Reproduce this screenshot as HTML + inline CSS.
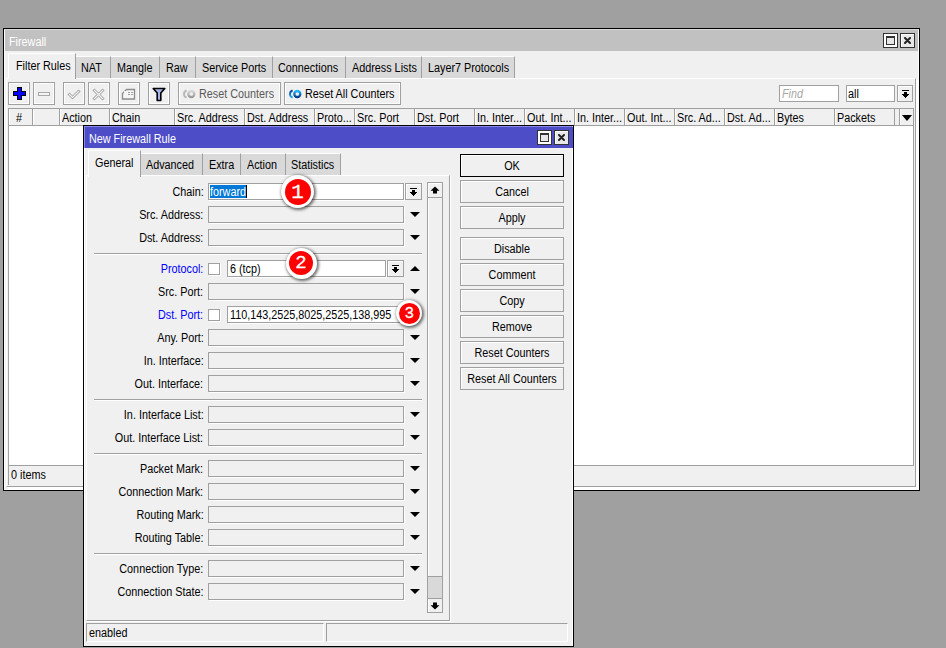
<!DOCTYPE html>
<html><head><meta charset="utf-8"><style>
*{box-sizing:border-box;margin:0;padding:0}
html,body{width:946px;height:648px;overflow:hidden}
body{background:#a0a0a0;position:relative;font-family:"Liberation Sans",sans-serif;font-size:12px;color:#000}
div,svg{position:absolute}
.t{white-space:nowrap;line-height:13px;height:13px;transform:scaleX(0.9)}
.tb{top:82px;width:22px;height:23px;border:1px solid #a0a0a0;background:#f0f0f0;box-shadow:inset 1px 1px 0 #fff,inset -1px -1px 0 #fff}
.tab{height:21px;background:#d9d9d9;border-right:1px solid #a0a0a0;border-top:1px solid #fff}
.hc{top:109px;height:16px;border-right:1px solid #a0a0a0;box-shadow:inset 1px 0 0 #fff}
.in{width:196px;height:17px;border:1px solid #a0a0a0;background:#f0f0f0;box-shadow:1px 1px 0 #fff}
.inw{background:#fff}
.dd{width:0;height:0;border-left:5px solid transparent;border-right:5px solid transparent;border-top:5px solid #000}
.ddu{width:0;height:0;border-left:5px solid transparent;border-right:5px solid transparent;border-bottom:5px solid #000}
.sep{height:2px;border-top:1px solid #a0a0a0;border-bottom:1px solid #fff}
.db{left:460px;width:104px;height:23px;border:1px solid #a0a0a0;background:#f0f0f0;box-shadow:inset 1px 1px 0 #fff}
.ddb{width:17px;height:17px;border:1px solid #a0a0a0;background:#f0f0f0;box-shadow:inset 1px 1px 0 #fff}
.cb{width:12px;height:12px;border:1px solid #a0a0a0;background:#fff;box-shadow:1px 1px 0 #fff}
.bdg{border-radius:50%;background:#fff;box-shadow:1px 1px 3px 1px rgba(0,0,0,.55)}
.bdr{border-radius:50%;background:#ff0000;color:#fff;text-align:center;font-family:"Liberation Mono",monospace;font-weight:normal;-webkit-text-stroke:0.3px #fff}
</style></head><body>
<div style="left:3px;top:28px;width:917px;height:463px;border:1px solid #000;background:#f0f0f0"></div>
<div style="left:4px;top:29px;width:915px;height:461px;border:1px solid #fff"></div>
<div style="left:5px;top:30px;width:913px;height:21px;background:#c1c1c1"></div>
<div style="left:4px;top:29px;width:915px;height:1px;background:#dadada"></div>
<div class="t" style="top:36px;color:#fff;left:9.3px;transform-origin:0 0;">Firewall</div>
<div style="left:883px;top:33px;width:15px;height:15px;border:1px solid #333;background:#fff"></div>
<div style="left:886px;top:36px;width:9px;height:9px;border:1px solid #333;border-top-width:2px;background:#e8e6e8"></div>
<div style="left:900px;top:33px;width:15px;height:15px;border:1px solid #333;background:#e8e8e8;box-shadow:inset 1px 1px 0 #fff"></div>
<svg style="left:904px;top:37px" width="7" height="7" viewBox="0 0 7 7"><path d="M1 1L6 6M6 1L1 6" stroke="#222" stroke-width="2" stroke-linecap="round"/></svg>
<div style="left:6px;top:78px;width:910px;height:409px;border-left:1px solid #fff;border-top:1px solid #fff;border-right:1px solid #a0a0a0;border-bottom:1px solid #a0a0a0;box-shadow:1px 1px 0 #fff,2px 2px 0 #fff"></div>
<div class="tab" style="left:76px;top:56px;width:35px;height:22px"></div>
<div class="tab" style="left:111px;top:56px;width:49px;height:22px"></div>
<div class="tab" style="left:160px;top:56px;width:36px;height:22px"></div>
<div class="tab" style="left:196px;top:56px;width:77px;height:22px"></div>
<div class="tab" style="left:273px;top:56px;width:73px;height:22px"></div>
<div class="tab" style="left:346px;top:56px;width:76px;height:22px"></div>
<div class="tab" style="left:422px;top:56px;width:93px;height:22px"></div>
<div style="left:8px;top:53px;width:68px;height:26px;background:#f0f0f0;border-left:1px solid #fff;border-top:1px solid #fff;border-right:1px solid #a0a0a0"></div>
<div class="t" style="top:60px;left:16.3px;transform-origin:0 0;">Filter Rules</div>
<div class="t" style="top:62px;left:81.3px;transform-origin:0 0;">NAT</div>
<div class="t" style="top:62px;left:117.3px;transform-origin:0 0;">Mangle</div>
<div class="t" style="top:62px;left:166.3px;transform-origin:0 0;">Raw</div>
<div class="t" style="top:62px;left:202.3px;transform-origin:0 0;">Service Ports</div>
<div class="t" style="top:62px;left:278.3px;transform-origin:0 0;">Connections</div>
<div class="t" style="top:62px;left:352.3px;transform-origin:0 0;">Address Lists</div>
<div class="t" style="top:62px;left:428.3px;transform-origin:0 0;">Layer7 Protocols</div>
<div class="tb" style="left:8px"></div>
<svg style="left:13px;top:87px" width="13" height="13" viewBox="0 0 13 13" shape-rendering="crispEdges"><path d="M4 0h5v4h4v5h-4v4h-5v-4h-4v-5h4z" fill="#000"/><path d="M5 1h3v4h4v3h-4v4h-3v-4h-4v-3h4z" fill="#0000ff"/></svg>
<div class="tb" style="left:33px"></div>
<div style="left:38px;top:92px;width:12px;height:4px;border:1px solid #a8a8a8;background:#f4f4f4"></div>
<div class="tb" style="left:63px"></div>
<svg style="left:67px;top:88px" width="14" height="12" viewBox="0 0 14 12"><path d="M2.5 6.5l3 3 6-6" fill="none" stroke="#a8a8a8" stroke-width="3" stroke-linecap="square"/><path d="M2.5 6.5l3 3 6-6" fill="none" stroke="#f4f4f4" stroke-width="1.1" stroke-linecap="square"/></svg>
<div class="tb" style="left:88px"></div>
<svg style="left:92px;top:88px" width="13" height="13" viewBox="0 0 13 13"><path d="M2.5 2.5l8 8M10.5 2.5l-8 8" fill="none" stroke="#a8a8a8" stroke-width="3" stroke-linecap="square"/><path d="M2.5 2.5l8 8M10.5 2.5l-8 8" fill="none" stroke="#f4f4f4" stroke-width="1.1" stroke-linecap="square"/></svg>
<div class="tb" style="left:118px"></div>
<svg style="left:121px;top:88px" width="15" height="13" viewBox="0 0 15 13"><path d="M5.5 1.5h8v9.5h-12v-5.5z" fill="#f6f6f6" stroke="#8c8c8c" stroke-width="1.3"/><path d="M7 4.5h2M10 4.5h2M7 6.5h2M10 6.5h2" stroke="#a0a0a0" stroke-width="1"/><rect x="3" y="3" width="1.6" height="1.6" fill="#fff"/></svg>
<div class="tb" style="left:148px"></div>
<svg style="left:152px;top:87px" width="14" height="15" viewBox="0 0 14 15"><path d="M1.2 1.5h11.6l-4 4.6v7.4h-3.6v-7.4z" fill="#a4b4e8" stroke="#000" stroke-width="1.6" stroke-linejoin="round"/></svg>
<div class="tb" style="left:178px;width:103px"></div>
<svg style="left:182px;top:89px" width="14" height="10" viewBox="0 0 14 10"><defs><linearGradient id="g1" x1="0" y1="0" x2="0" y2="1"><stop offset="0" stop-color="#d8d8d8"/><stop offset="1" stop-color="#9a9a9a"/></linearGradient></defs><path d="M4.6 1.3A5 4.2 0 0 0 4.6 8.7" fill="none" stroke="#b8b8b8" stroke-width="1.9"/><circle cx="9.3" cy="5" r="3" fill="none" stroke="url(#g1)" stroke-width="2.3"/></svg>
<div class="t" style="top:88px;color:#5a5a5a;left:198.8px;transform-origin:0 0;">Reset Counters</div>
<div class="tb" style="left:284px;width:117px"></div>
<svg style="left:288px;top:89px" width="14" height="10" viewBox="0 0 14 10"><defs><linearGradient id="g2" x1="0" y1="0" x2="0" y2="1"><stop offset="0" stop-color="#20b8ff"/><stop offset="1" stop-color="#003a8a"/></linearGradient><linearGradient id="g3" x1="0" y1="0" x2="0" y2="1"><stop offset="0" stop-color="#0a3c90"/><stop offset="1" stop-color="#28b0f8"/></linearGradient></defs><path d="M4.6 1.3A5 4.2 0 0 0 4.6 8.7" fill="none" stroke="url(#g3)" stroke-width="1.9"/><circle cx="9.3" cy="5" r="3" fill="none" stroke="url(#g2)" stroke-width="2.3"/></svg>
<div class="t" style="top:88px;left:304.8px;transform-origin:0 0;">Reset All Counters</div>
<div style="left:779px;top:85px;width:60px;height:17px;border:1px solid #a0a0a0;background:#fff"></div>
<div class="t" style="top:88px;color:#a8a8a8;left:782.3px;transform-origin:0 0;font-style:italic;">Find</div>
<div style="left:846px;top:85px;width:49px;height:17px;border:1px solid #a0a0a0;background:#fff"></div>
<div class="t" style="top:88px;left:847.8px;transform-origin:0 0;">all</div>
<div class="ddb" style="left:897px;top:85px;width:16px"></div>
<svg style="left:902px;top:90px" width="7" height="8" viewBox="0 0 7 8" shape-rendering="crispEdges"><path d="M0 0h7v1H0zM2 2h3v2h2v1h-1v1h-1v1h-1v1h-1v-1h-1v-1h-1v-1h-1v-1h2z" fill="#000"/></svg>
<div style="left:8px;top:108px;width:906px;height:358px;border:1px solid #a0a0a0;background:#fff"></div>
<div style="left:9px;top:109px;width:904px;height:17px;background:#f0f0f0;border-bottom:1px solid #a0a0a0"></div>
<div class="hc" style="left:9px;width:24px"></div>
<div class="t" style="top:112px;left:16.3px;transform-origin:0 0;">#</div>
<div class="hc" style="left:33px;width:27px"></div>
<div class="hc" style="left:60px;width:50px"></div>
<div class="t" style="top:112px;left:62.3px;transform-origin:0 0;">Action</div>
<div class="hc" style="left:110px;width:65px"></div>
<div class="t" style="top:112px;left:112.3px;transform-origin:0 0;">Chain</div>
<div class="hc" style="left:175px;width:70px"></div>
<div class="t" style="top:112px;left:177.3px;transform-origin:0 0;">Src. Address</div>
<div class="hc" style="left:245px;width:70px"></div>
<div class="t" style="top:112px;left:247.3px;transform-origin:0 0;">Dst. Address</div>
<div class="hc" style="left:315px;width:40px"></div>
<div class="t" style="top:112px;left:317.3px;transform-origin:0 0;">Proto...</div>
<div class="hc" style="left:355px;width:60px"></div>
<div class="t" style="top:112px;left:357.3px;transform-origin:0 0;">Src. Port</div>
<div class="hc" style="left:415px;width:60px"></div>
<div class="t" style="top:112px;left:417.3px;transform-origin:0 0;">Dst. Port</div>
<div class="hc" style="left:475px;width:50px"></div>
<div class="t" style="top:112px;left:477.3px;transform-origin:0 0;">In. Inter...</div>
<div class="hc" style="left:525px;width:50px"></div>
<div class="t" style="top:112px;left:527.3px;transform-origin:0 0;">Out. Int...</div>
<div class="hc" style="left:575px;width:50px"></div>
<div class="t" style="top:112px;left:577.3px;transform-origin:0 0;">In. Inter...</div>
<div class="hc" style="left:625px;width:50px"></div>
<div class="t" style="top:112px;left:627.3px;transform-origin:0 0;">Out. Int...</div>
<div class="hc" style="left:675px;width:50px"></div>
<div class="t" style="top:112px;left:677.3px;transform-origin:0 0;">Src. Ad...</div>
<div class="hc" style="left:725px;width:50px"></div>
<div class="t" style="top:112px;left:727.3px;transform-origin:0 0;">Dst. Ad...</div>
<div class="hc" style="left:775px;width:60px"></div>
<div class="t" style="top:112px;left:777.3px;transform-origin:0 0;">Bytes</div>
<div class="hc" style="left:835px;width:60px"></div>
<div class="t" style="top:112px;left:837.3px;transform-origin:0 0;">Packets</div>
<div style="left:899px;top:109px;width:14px;height:16px;border-left:1px solid #a0a0a0;box-shadow:inset 1px 0 0 #fff"></div>
<div class="dd" style="left:902px;top:115px;border-left-width:5px;border-right-width:5px;border-top-width:6px"></div>
<div style="left:8px;top:466px;width:1px;height:19px;background:#a0a0a0"></div>
<div class="t" style="top:469px;left:10.8px;transform-origin:0 0;">0 items</div>
<div style="left:83px;top:125px;width:491px;height:522px;border:1px solid #000;background:#f0f0f0"></div>
<div style="left:84px;top:126px;width:489px;height:520px;border-left:1px solid #fff;border-top:1px solid #8a8ae6;border-right:1px solid #fff"></div>
<div style="left:84px;top:126px;width:1px;height:22px;background:#8a8ae6"></div>
<div style="left:572px;top:127px;width:1px;height:21px;background:#4d4dc8"></div>
<div style="left:85px;top:127px;width:487px;height:21px;background:#4d4dc8"></div>
<div class="t" style="top:133px;color:#fff;left:89.3px;transform-origin:0 0;">New Firewall Rule</div>
<div style="left:537px;top:130px;width:15px;height:15px;border:1px solid #333;background:#fff"></div>
<div style="left:540px;top:133px;width:9px;height:9px;border:1px solid #333;border-top-width:2px;background:#e8e6e8"></div>
<div style="left:554px;top:130px;width:15px;height:15px;border:1px solid #333;background:#e8e8e8;box-shadow:inset 1px 1px 0 #fff"></div>
<svg style="left:558px;top:134px" width="7" height="7" viewBox="0 0 7 7"><path d="M1 1L6 6M6 1L1 6" stroke="#222" stroke-width="2" stroke-linecap="round"/></svg>
<div class="tab" style="left:141px;top:153px;width:62px;height:22px"></div>
<div class="tab" style="left:203px;top:153px;width:38px;height:22px"></div>
<div class="tab" style="left:241px;top:153px;width:45px;height:22px"></div>
<div class="tab" style="left:286px;top:153px;width:55px;height:22px"></div>
<div style="left:86px;top:175px;width:364px;height:446px;border-left:1px solid #fff;border-top:1px solid #fff;border-right:1px solid #a0a0a0;border-bottom:1px solid #a0a0a0;box-shadow:1px 1px 0 #fff"></div>
<div style="left:88px;top:150px;width:53px;height:27px;background:#f0f0f0;border-left:1px solid #fff;border-top:1px solid #fff;border-right:1px solid #a0a0a0"></div>
<div class="t" style="top:157px;left:95.3px;transform-origin:0 0;">General</div>
<div class="t" style="top:159px;left:146.3px;transform-origin:0 0;">Advanced</div>
<div class="t" style="top:159px;left:209.3px;transform-origin:0 0;">Extra</div>
<div class="t" style="top:159px;left:247.3px;transform-origin:0 0;">Action</div>
<div class="t" style="top:159px;left:291.3px;transform-origin:0 0;">Statistics</div>
<div style="left:94px;top:253px;width:328px;height:2px;border-top:1px solid #a0a0a0;border-bottom:1px solid #fff"></div>
<div style="left:94px;top:399px;width:328px;height:2px;border-top:1px solid #a0a0a0;border-bottom:1px solid #fff"></div>
<div style="left:94px;top:453px;width:328px;height:2px;border-top:1px solid #a0a0a0;border-bottom:1px solid #fff"></div>
<div style="left:94px;top:553px;width:328px;height:2px;border-top:1px solid #a0a0a0;border-bottom:1px solid #fff"></div>
<div class="t" style="top:186px;right:742.5px;text-align:right;transform-origin:100% 0;">Chain:</div>
<div class="in inw" style="left:208px;top:183px"></div>
<div style="left:210px;top:185px;width:37px;height:13px;background:#0078d7"></div>
<div class="t" style="top:186px;color:#fff;left:210.3px;transform-origin:0 0;">forward</div>
<div style="left:246px;top:185px;width:1px;height:13px;background:#000"></div>
<div class="ddb" style="left:405px;top:183px;width:17px"></div>
<svg style="left:410px;top:188px" width="7" height="8" viewBox="0 0 7 8" shape-rendering="crispEdges"><path d="M0 0h7v1H0zM2 2h3v2h2v1h-1v1h-1v1h-1v1h-1v-1h-1v-1h-1v-1h-1v-1h2z" fill="#000"/></svg>
<div class="t" style="top:209px;right:742.5px;text-align:right;transform-origin:100% 0;">Src. Address:</div>
<div class="in" style="left:208px;top:206px"></div>
<div class="dd" style="left:409.5px;top:212px"></div>
<div class="t" style="top:232px;right:742.5px;text-align:right;transform-origin:100% 0;">Dst. Address:</div>
<div class="in" style="left:208px;top:229px"></div>
<div class="dd" style="left:409.5px;top:235px"></div>
<div class="t" style="top:263px;color:#0000ff;right:742.5px;text-align:right;transform-origin:100% 0;">Protocol:</div>
<div class="cb" style="left:208px;top:263px"></div>
<div class="in inw" style="left:227px;top:260px;width:159px"></div>
<div class="t" style="top:263px;left:229.8px;transform-origin:0 0;">6 (tcp)</div>
<div class="ddb" style="left:387px;top:260px;width:17px"></div>
<svg style="left:392px;top:265px" width="7" height="8" viewBox="0 0 7 8" shape-rendering="crispEdges"><path d="M0 0h7v1H0zM2 2h3v2h2v1h-1v1h-1v1h-1v1h-1v-1h-1v-1h-1v-1h-1v-1h2z" fill="#000"/></svg>
<div class="ddu" style="left:409.5px;top:266px"></div>
<div class="t" style="top:286px;right:742.5px;text-align:right;transform-origin:100% 0;">Src. Port:</div>
<div class="in" style="left:208px;top:283px"></div>
<div class="dd" style="left:409.5px;top:289px"></div>
<div class="t" style="top:309px;color:#0000ff;right:742.5px;text-align:right;transform-origin:100% 0;">Dst. Port:</div>
<div class="cb" style="left:208px;top:309px"></div>
<div class="in inw" style="left:227px;top:306px;width:177px"></div>
<div class="t" style="top:309px;left:230.3px;transform-origin:0 0;">110,143,2525,8025,2525,138,995</div>
<div class="t" style="top:332px;right:742.5px;text-align:right;transform-origin:100% 0;">Any. Port:</div>
<div class="in" style="left:208px;top:329px"></div>
<div class="dd" style="left:409.5px;top:335px"></div>
<div class="t" style="top:355px;right:742.5px;text-align:right;transform-origin:100% 0;">In. Interface:</div>
<div class="in" style="left:208px;top:352px"></div>
<div class="dd" style="left:409.5px;top:358px"></div>
<div class="t" style="top:378px;right:742.5px;text-align:right;transform-origin:100% 0;">Out. Interface:</div>
<div class="in" style="left:208px;top:375px"></div>
<div class="dd" style="left:409.5px;top:381px"></div>
<div class="t" style="top:409px;right:742.5px;text-align:right;transform-origin:100% 0;">In. Interface List:</div>
<div class="in" style="left:208px;top:406px"></div>
<div class="dd" style="left:409.5px;top:412px"></div>
<div class="t" style="top:432px;right:742.5px;text-align:right;transform-origin:100% 0;">Out. Interface List:</div>
<div class="in" style="left:208px;top:429px"></div>
<div class="dd" style="left:409.5px;top:435px"></div>
<div class="t" style="top:463px;right:742.5px;text-align:right;transform-origin:100% 0;">Packet Mark:</div>
<div class="in" style="left:208px;top:460px"></div>
<div class="dd" style="left:409.5px;top:466px"></div>
<div class="t" style="top:486px;right:742.5px;text-align:right;transform-origin:100% 0;">Connection Mark:</div>
<div class="in" style="left:208px;top:483px"></div>
<div class="dd" style="left:409.5px;top:489px"></div>
<div class="t" style="top:509px;right:742.5px;text-align:right;transform-origin:100% 0;">Routing Mark:</div>
<div class="in" style="left:208px;top:506px"></div>
<div class="dd" style="left:409.5px;top:512px"></div>
<div class="t" style="top:532px;right:742.5px;text-align:right;transform-origin:100% 0;">Routing Table:</div>
<div class="in" style="left:208px;top:529px"></div>
<div class="dd" style="left:409.5px;top:535px"></div>
<div class="t" style="top:563px;right:742.5px;text-align:right;transform-origin:100% 0;">Connection Type:</div>
<div class="in" style="left:208px;top:560px"></div>
<div class="dd" style="left:409.5px;top:566px"></div>
<div class="t" style="top:586px;right:742.5px;text-align:right;transform-origin:100% 0;">Connection State:</div>
<div class="in" style="left:208px;top:583px"></div>
<div class="dd" style="left:409.5px;top:589px"></div>
<div style="left:427px;top:182px;width:16px;height:431px;border:1px solid #a0a0a0;background:#f0f0f0;box-shadow:inset 1px 1px 0 #fff"></div>
<div style="left:428px;top:197px;width:14px;height:1px;background:#a0a0a0"></div>
<div style="left:428px;top:576px;width:14px;height:22px;background:#d9d9d9;border-top:1px solid #a0a0a0"></div>
<div style="left:428px;top:598px;width:14px;height:1px;background:#a0a0a0"></div>
<svg style="left:430px;top:186px" width="10" height="8" viewBox="0 0 10 8"><path d="M5 0.5L9.5 4.8H7V7.5H3V4.8H0.5Z" fill="#000"/></svg>
<svg style="left:430px;top:602px" width="10" height="8" viewBox="0 0 10 8"><path d="M5 7.5L9.5 3.2H7V0.5H3V3.2H0.5Z" fill="#000"/></svg>
<div class="db" style="top:154px;border-color:#000"></div>
<div class="t" style="top:160px;left:412px;width:200px;text-align:center;transform-origin:50% 0;">OK</div>
<div class="db" style="top:180px"></div>
<div class="t" style="top:186px;left:412px;width:200px;text-align:center;transform-origin:50% 0;">Cancel</div>
<div class="db" style="top:206px"></div>
<div class="t" style="top:212px;left:412px;width:200px;text-align:center;transform-origin:50% 0;">Apply</div>
<div class="db" style="top:237px"></div>
<div class="t" style="top:243px;left:412px;width:200px;text-align:center;transform-origin:50% 0;">Disable</div>
<div class="db" style="top:263px"></div>
<div class="t" style="top:269px;left:412px;width:200px;text-align:center;transform-origin:50% 0;">Comment</div>
<div class="db" style="top:289px"></div>
<div class="t" style="top:295px;left:412px;width:200px;text-align:center;transform-origin:50% 0;">Copy</div>
<div class="db" style="top:315px"></div>
<div class="t" style="top:321px;left:412px;width:200px;text-align:center;transform-origin:50% 0;">Remove</div>
<div class="db" style="top:341px"></div>
<div class="t" style="top:347px;left:412px;width:200px;text-align:center;transform-origin:50% 0;">Reset Counters</div>
<div class="db" style="top:367px"></div>
<div class="t" style="top:373px;left:412px;width:200px;text-align:center;transform-origin:50% 0;">Reset All Counters</div>
<div style="left:86px;top:623px;width:238px;height:19px;border-left:1px solid #a0a0a0;border-top:1px solid #a0a0a0;border-right:1px solid #fff;border-bottom:1px solid #fff"></div>
<div style="left:326px;top:623px;width:242px;height:19px;border-left:1px solid #a0a0a0;border-top:1px solid #a0a0a0;border-right:1px solid #fff;border-bottom:1px solid #fff"></div>
<div class="t" style="top:627px;left:89.3px;transform-origin:0 0;">enabled</div>
<div class="bdg" style="left:281.0px;top:175.0px;width:33px;height:33px"></div>
<div class="bdr" style="left:284.5px;top:178.5px;width:26px;height:26px;font-size:21px;line-height:27px">1</div>
<div class="bdg" style="left:285.5px;top:247.5px;width:31px;height:31px"></div>
<div class="bdr" style="left:288.75px;top:250.75px;width:24.5px;height:24.5px;font-size:19px;line-height:25.5px">2</div>
<div class="bdg" style="left:396.2px;top:300.4px;width:26px;height:26px"></div>
<div class="bdr" style="left:398.7px;top:302.9px;width:21px;height:21px;font-size:16px;line-height:22px">3</div>
</body></html>
